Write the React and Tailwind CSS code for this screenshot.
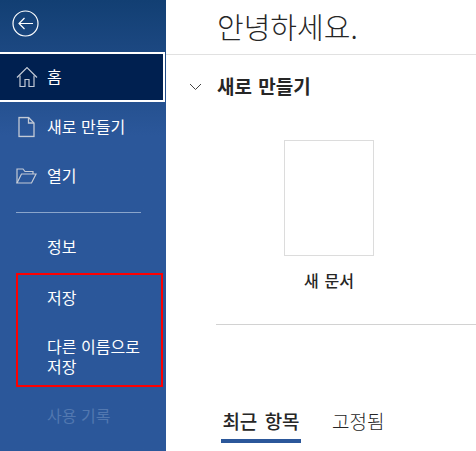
import React from 'react';

const font = "font-['Noto_Sans_CJK_KR','Noto_Sans',sans-serif]";

function HomeIcon() {
    return (
        <svg width="22" height="21" viewBox="0 0 22 21" fill="none" stroke="#c3cad6" strokeWidth="1.2">
            <path d="M1 11L11 1l10 10" />
            <path d="M4 9v11h5v-7h4v7h5V9" />
        </svg>
    );
}

function DocIcon() {
    return (
        <svg className="ml-[2px]" width="17" height="21" viewBox="0 0 17 21" fill="none" stroke="#c3cad6" strokeWidth="1.3">
            <path d="M1 1h9.500L16 6.500V20H1z" />
            <path d="M10.500 1v5.500H16" />
        </svg>
    );
}

function FolderIcon() {
    return (
        <svg width="21" height="17" viewBox="0 0 21 17" fill="none" stroke="#c3cad6" strokeWidth="1.200">
            <path d="M1 15.500V1.500h6l2 2.500h8v2.500" />
            <path d="M1 15.500h14.500l4.500-9H5.500z" />
        </svg>
    );
}

function NavItem({ icon, children, className = '' }) {
    return (
        <div className={`h-[50px] flex items-center pl-[47px] pb-[2px] text-[16px] [word-spacing:1px] text-white relative ${className}`}>
            {icon && <span className="absolute left-[16px] top-1/2 -translate-y-1/2 flex">{icon}</span>}
            {children}
        </div>
    );
}

export default function App() {
    return (
        <div className={`w-[476px] h-[451px] flex overflow-hidden bg-white ${font}`}>
            <aside className="w-[166px] flex-shrink-0 flex flex-col bg-gradient-to-b from-[#123f73] via-[#2b579a] via-30% to-[#2b579a]">
                <div className="h-[52px] pl-[12px] pt-[10px]">
                    <svg width="27" height="27" viewBox="0 0 27 27" fill="none" stroke="white" strokeWidth="1.2">
                        <circle cx="13.5" cy="13.5" r="12.5" />
                        <path d="M7 13.500h14M12.500 8l-5.500 5.500 5.500 5.500" />
                    </svg>
                </div>
                <div className="h-[50px] w-[165px] flex items-center pl-[47px] pb-[2px] text-[16px] text-white relative bg-[#002050] border-y-2 border-r-2 border-white">
                    <span className="absolute left-[16px] top-1/2 -translate-y-1/2 flex"><HomeIcon /></span>
                    홈
                </div>
                <NavItem icon={<DocIcon />}>새로 만들기</NavItem>
                <NavItem icon={<FolderIcon />} className="-mt-[1px]">열기</NavItem>
                <div className="h-px w-[125px] ml-[16px] mt-[11px] bg-[#8aa5cb]" />
                <NavItem className="mt-[9px] mb-[1px]">정보</NavItem>
                <div className="ml-[16px] w-[147px] mb-[4px] border-2 border-[#ff0000]">
                    <div className="h-[44px] flex items-center pl-[29px] text-[16px] text-white">저장</div>
                    <div className="h-[66px] flex items-center pl-[29px] pt-[8px] text-[16px] [word-spacing:1px] leading-[20px] text-white">
                        <span>다른 이름으로<br />저장</span>
                    </div>
                </div>
                <div className="h-[50px] flex items-center pl-[47px] pb-[2px] text-[16px] [word-spacing:1px] text-[#5278b0]">사용 기록</div>
            </aside>
            <main className="flex-1 min-w-0 flex flex-col">
                <div className="h-[55px] flex-shrink-0 border-b border-[#e1e1e1] pl-[51px] text-[29px] leading-[52px] font-light text-[#262626]">
                    안녕하세요.
                </div>
                <div className="h-[63px] flex-shrink-0 flex items-center text-[19px] [word-spacing:2px] font-bold text-[#262626]">
                    <svg className="ml-[23px] mr-[15px]" width="13" height="8" viewBox="0 0 13 8" fill="none" stroke="#444" strokeWidth="1">
                        <path d="M1 1l5.500 5.500L12 1" />
                    </svg>
                    새로 만들기
                </div>
                <div className="ml-[118px] mt-[22px] w-[90px] h-[116px] flex-shrink-0 border border-[#dcdcdc] bg-white" />
                <div className="w-[90px] ml-[118px] mt-[13px] text-center text-[16px] [word-spacing:2px] leading-[22px] font-medium text-[#262626] whitespace-nowrap">새 문서</div>
                <div className="ml-[50px] mt-[33px] h-px flex-shrink-0 bg-[#d2d2d2]" />
                <div className="ml-[55px] mt-[83px] flex items-start gap-[31px] text-[19px] text-[#262626]">
                    <div className="w-[80px] h-[35px] flex flex-col">
                        <span className="flex-1 text-center leading-[26px] font-medium [word-spacing:3px] whitespace-nowrap">최근 항목</span>
                        <span className="h-[4px] bg-[#2b579a]" />
                    </div>
                    <span className="leading-[26px] font-light">고정됨</span>
                </div>
            </main>
        </div>
    );
}
